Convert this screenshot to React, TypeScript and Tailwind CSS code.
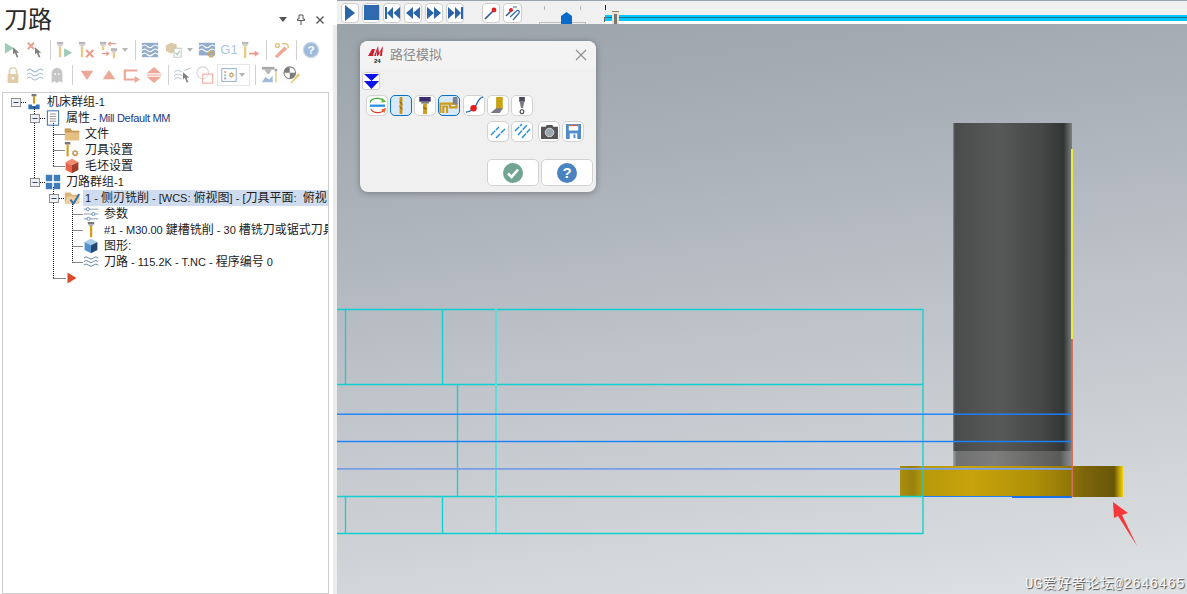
import type { ReactNode } from 'react';

const FONT = '"Liberation Sans", "Noto Sans CJK SC", sans-serif';

function Svg({ children, size = 18 }: { children: ReactNode; size?: number }) {
  return (
    <svg width={size} height={size} viewBox="0 0 20 20" className="block shrink-0">
      {children}
    </svg>
  );
}

function Tool({ x = 5, y = 1, h = 15, faded = true }: { x?: number; y?: number; h?: number; faded?: boolean }) {
  return (
    <g opacity={faded ? 0.6 : 1}>
      <rect x={x} y={y} width="7" height="3" fill="#777" />
      <rect x={x + 1} y={y + 3} width="5" height="2" fill="#aaa" />
      <rect x={x + 2.2} y={y + 5} width="2.6" height={h - 5} fill="#d59c10" />
    </g>
  );
}

function Cursor({ x = 10, y = 8 }: { x?: number; y?: number }) {
  return (
    <path
      d={`M${x} ${y} l7 6 h-3 l2 5 h-2 l-2 -5 l-2 2 z`}
      fill="#6b6b6b"
    />
  );
}

function Waves({ color = '#7f9fc4', y = 3 }: { color?: string; y?: number }) {
  return (
    <g fill="none" stroke={color} strokeWidth="1.2">
      {[0, 4.5, 9].map((d) => (
        <path key={d} d={`M1 ${y + d + 2} q3 -3 6 0 t6 0 t6 0`} />
      ))}
    </g>
  );
}

function Gear({ x, y, r = 3, color = '#c2995a' }: { x: number; y: number; r?: number; color?: string }) {
  return (
    <g>
      <circle cx={x} cy={y} r={r} fill="none" stroke={color} strokeWidth={r * 0.7} />
      <circle cx={x} cy={y} r={r + 0.9} fill="none" stroke={color} strokeWidth="1.2" strokeDasharray="1.5 1.5" />
    </g>
  );
}

function Slot({ children, className = '' }: { children: ReactNode; className?: string }) {
  return <div className={`flex h-[22px] w-[22px] shrink-0 items-center justify-center ${className}`}>{children}</div>;
}

function Sep({ className = '' }: { className?: string }) {
  return <div className={`h-[20px] w-px shrink-0 bg-[#c9c9c9] ${className}`} />;
}

function Drop({ className = '' }: { className?: string }) {
  return (
    <div className={`flex h-[20px] w-[10px] shrink-0 items-center justify-center ${className}`}>
      <div className="h-0 w-0 border-x-[3.5px] border-t-[4px] border-x-transparent border-t-[#aaa]" />
    </div>
  );
}

function PanelToolbar() {
  return (
    <div className="flex flex-col gap-[3px] pl-[2px]">
      <div className="flex h-[22px] items-center opacity-85">
        <Slot>
          <Svg><path d="M1 2 L11 8 L1 14 Z" fill="#8fc2ab" /><Cursor x={10} y={7} /></Svg>
        </Slot>
        <Slot>
          <Svg>
            <path d="M2 2 L9 9 M9 2 L2 9" stroke="#ea8d7c" strokeWidth="2.2" />
            <Cursor x={10} y={7} />
          </Svg>
        </Slot>
        <Sep className="ml-[4px]" />
        <Slot className="ml-[3px]">
          <Svg><Tool x={1} h={17} /><path d="M9 8 L18 13 L9 18 Z" fill="#8fc2ab" /></Svg>
        </Slot>
        <Slot>
          <Svg><Tool x={1} h={17} /><path d="M9 10 L17 18 M17 10 L9 18" stroke="#ea8d7c" strokeWidth="2.2" /></Svg>
        </Slot>
        <Slot>
          <Svg>
            <Tool x={0} h={9} />
            <Tool x={12} y={8} h={11} />
            <path d="M9 3 h9 M9 3 l3 -2 M9 3 l3 2 M2 14 h8 M10 14 l-3 -2 M10 14 l-3 2" stroke="#ea8d7c" strokeWidth="1.4" fill="none" />
          </Svg>
        </Slot>
        <Drop />
        <Sep className="ml-[5px]" />
        <Slot className="ml-[3px]">
          <Svg>
            <rect x="1" y="2" width="18" height="16" fill="#7f9fc4" />
            <g fill="none" stroke="#fff" strokeWidth="1.2">
              <path d="M1 6 q3 -3 6 0 t6 0 t6 0" />
              <path d="M1 10.5 q3 -3 6 0 t6 0 t6 0" />
              <path d="M1 15 q3 -3 6 0 t6 0 t6 0" />
            </g>
          </Svg>
        </Slot>
        <Slot className="ml-[2px]">
          <Svg>
            <path d="M1 5 L7 2 L13 4 L13 11 L7 14 L1 11 Z" fill="#d8bf98" />
            <rect x="10" y="8" width="8" height="10" fill="#fff" stroke="#a9bfa9" />
            <path d="M11.5 13 l2 2 l3 -4" stroke="#8fc2ab" strokeWidth="1.3" fill="none" />
          </Svg>
        </Slot>
        <Drop />
        <Slot className="ml-[1px]">
          <Svg>
            <rect x="1" y="2" width="18" height="14" fill="#7f9fc4" />
            <g fill="none" stroke="#fff" strokeWidth="1.2">
              <path d="M1 6 q3 -3 6 0 t6 0 t6 0" />
              <path d="M1 10.5 q3 -3 6 0 t6 0 t6 0" />
            </g>
            <Gear x={14.5} y={14.5} r={2.6} />
          </Svg>
        </Slot>
        <Slot>
          <span className="text-[13px] text-[#9dbbdc]">G1</span>
        </Slot>
        <Slot>
          <Svg>
            <Tool x={0} h={18} />
            <path d="M8 14 h8" stroke="#ea8d7c" strokeWidth="2" />
            <path d="M14 10.5 L19 14 L14 17.5 Z" fill="#ea8d7c" />
          </Svg>
        </Slot>
        <Sep className="ml-[4px]" />
        <Slot className="ml-[3px]">
          <Svg>
            <path d="M3 17 L14 6 L17 9 L6 19 Z" fill="#ea9a88" />
            <path d="M11 3 h5 l2 2 v3" fill="none" stroke="#d8c07a" strokeWidth="1.6" />
            <circle cx="6" cy="5" r="2.2" fill="none" stroke="#d8b56a" strokeWidth="1.4" />
          </Svg>
        </Slot>
        <Sep className="ml-[4px]" />
        <Slot className="ml-[3px]">
          <Svg>
            <circle cx="10" cy="10" r="8.5" fill="#8fb0d6" stroke="#c2d3e6" strokeWidth="1.2" />
            <text x="10" y="14.5" textAnchor="middle" fontSize="13" fontWeight="700" fill="#fff" fontFamily="Liberation Sans">?</text>
          </Svg>
        </Slot>
      </div>
      <div className="flex h-[22px] items-center opacity-85">
        <Slot>
          <Svg>
            <path d="M6 9 V6 a4 4 0 0 1 8 0 V9" fill="none" stroke="#dcc8a4" strokeWidth="1.8" />
            <rect x="4" y="9" width="12" height="10" rx="1" fill="#dcc39a" />
            <circle cx="10" cy="13.5" r="1.4" fill="#fff" />
          </Svg>
        </Slot>
        <Slot>
          <Svg><Waves color="#9db6d4" /></Svg>
        </Slot>
        <Slot>
          <Svg>
            <path d="M4 19 V8 a6 6 0 0 1 12 0 V19 L13 17 L10 19 L7 17 Z" fill="#bdbdbd" />
            <circle cx="8" cy="9" r="1" fill="#fff" />
            <circle cx="12" cy="9" r="1" fill="#fff" />
          </Svg>
        </Slot>
        <Sep className="ml-[4px]" />
        <Slot className="ml-[3px]">
          <Svg size={14}><path d="M1 4 H19 L10 17 Z" fill="#ea9a88" /></Svg>
        </Slot>
        <Slot>
          <Svg size={14}><path d="M1 16 H19 L10 3 Z" fill="#ea9a88" /></Svg>
        </Slot>
        <Slot className="ml-[1px]">
          <Svg>
            <path d="M16 5 H2 V15 H13" fill="none" stroke="#ea9a88" strokeWidth="2.4" />
            <path d="M13 11 L19 15 L13 19 Z" fill="#ea9a88" />
          </Svg>
        </Slot>
        <Slot>
          <Svg>
            <path d="M2 8 H18 L10 1 Z M2 12 H18 L10 19 Z" fill="#ea9a88" />
            <rect x="2" y="9.4" width="16" height="1.2" fill="#ea9a88" />
          </Svg>
        </Slot>
        <Sep className="ml-[3px]" />
        <Slot className="ml-[3px]">
          <Svg>
            <g fill="none" stroke="#a9bccf" strokeWidth="1.1">
              <path d="M0 7 q4 -4 9 0 M0 11 q4 -4 9 0 M0 15 q4 -4 9 0" />
            </g>
            <path d="M12 5 L19 2" stroke="#aaa" />
            <Cursor x={10} y={7} />
          </Svg>
        </Slot>
        <Slot>
          <Svg>
            <circle cx="7.5" cy="7.5" r="6.5" fill="none" stroke="#cfcfcf" strokeWidth="1.2" />
            <rect x="7.5" y="9" width="11" height="10" fill="#fff" fillOpacity="0.4" stroke="#ea9a88" strokeWidth="1.2" />
          </Svg>
        </Slot>
        <div className="ml-[1px] flex h-[22px] w-[33px] shrink-0 items-center border border-[#e2e2e2] pl-[3px]">
          <Svg size={16}>
            <rect x="1" y="2" width="18" height="16" fill="#fff" stroke="#7f9fc4" strokeWidth="1.2" />
            <rect x="4" y="5" width="2.5" height="2.5" fill="#ea9a88" />
            <rect x="4" y="9" width="2.5" height="2.5" fill="#8fc2ab" />
            <rect x="4" y="13" width="2.5" height="2.5" fill="#7f9fc4" />
            <Gear x={13} y={10} r={2} />
          </Svg>
          <Drop />
        </div>
        <Sep className="ml-[5px]" />
        <Slot className="ml-[3px]">
          <Svg>
            <rect x="1" y="1" width="14" height="3" fill="#999" />
            <path d="M4 4 H12 L9 9 H7 Z" fill="#aaa" />
            <path d="M1 18 L5 12 L9 15 L13 11 V18 Z" fill="#8fb0d6" />
            <rect x="15" y="3" width="3" height="3" fill="#999" />
            <rect x="16" y="6" width="1.4" height="12" fill="#d8b56a" />
          </Svg>
        </Slot>
        <Slot>
          <Svg>
            <circle cx="7.5" cy="7.5" r="6.5" fill="#fff" stroke="#777" strokeWidth="1.2" />
            <path d="M7.5 1 A6.5 6.5 0 0 0 1 7.5 H7.5 Z M7.5 7.5 H14 A6.5 6.5 0 0 1 7.5 14 Z" fill="#666" />
            <path d="M8 19 L17 8 L19 10 L10 19 Z" fill="#e3bf5e" />
          </Svg>
        </Slot>
      </div>
    </div>
  );
}

function TreeLines() {
  const boxes: [number, number][] = [[16, 102], [35, 118], [35, 182], [54, 198]];
  return (
    <svg width="325" height="200" viewBox="3 93 325 200" className="pointer-events-none absolute left-0 top-0">
      <g stroke="#111" strokeWidth="1" strokeDasharray="1 1" fill="none">
        <path d="M21 102.5 H27 M40 118.5 H46 M40 182.5 H46 M59 198.5 H64" />
        <path d="M34.5 107 V114 M34.5 123 V178" />
        <path d="M53.5 123 V166.5 M53.5 134.5 H65 M53.5 150.5 H65 M53.5 166.5 H65" />
        <path d="M53.5 187 V194 M53.5 203 V278.5 M53.5 278.5 H66" />
        <path d="M72.5 204 V262.5 M72.5 214.5 H83 M72.5 230.5 H83 M72.5 246.5 H83 M72.5 262.5 H83" />
      </g>
      {boxes.map(([x, y]) => (
        <g key={y}>
          <rect x={x - 4.5} y={y - 3.5} width="9" height="8" fill="#eef0f3" stroke="#8f8f8f" />
          <path d={`M${x - 2.5} ${y + 0.5} H${x + 2.5}`} stroke="#2e4a78" strokeWidth="1" />
        </g>
      ))}
    </svg>
  );
}

function Row({ pl, icon, children, selected = false }: { pl: string; icon: ReactNode; children: ReactNode; selected?: boolean }) {
  return (
    <div className={`flex h-[16px] items-center overflow-hidden whitespace-nowrap ${pl}`}>
      <div className="flex h-[16px] w-[16px] shrink-0 items-center justify-center">{icon}</div>
      {selected ? (
        <div className="ml-[3px] flex h-[16px] flex-1 items-center overflow-hidden bg-[#cfdcf0] pl-[2px]">{children}</div>
      ) : (
        <div className="ml-[5px] flex h-[16px] items-center">{children}</div>
      )}
    </div>
  );
}

function Latin({ children, color = '' }: { children: ReactNode; color?: string }) {
  return <span className={`whitespace-pre text-[11px] ${color}`}>{children}</span>;
}

function ProcessTree() {
  return (
    <div className="relative mt-[6px] ml-[2px] flex-1 overflow-hidden border border-[#cdcdcd] bg-white pt-px text-[12px] text-[#1c1c1c]">
      <TreeLines />
      <Row
        pl="pl-[23px]"
        icon={
          <Svg size={16}>
            <rect x="7" y="0" width="6" height="3" fill="#777" />
            <rect x="8.7" y="3" width="2.6" height="9" fill="#d59c10" />
            <path d="M3 13 H7 L8 15 H12 L13 13 H17 V19 H3 Z" fill="#2f6fb3" />
          </Svg>
        }
      >
        机床群组<Latin>-1</Latin>
      </Row>
      <Row
        pl="pl-[42px]"
        icon={
          <Svg size={16}>
            <rect x="3" y="1" width="14" height="18" fill="#fff" stroke="#4f7fb0" strokeWidth="1.4" />
            <path d="M6 5 H14 M6 8 H14 M6 11 H14 M6 14 H14" stroke="#888" strokeWidth="1.1" />
          </Svg>
        }
      >
        属性<Latin color="text-[#1b3b85] tracking-[-0.3px]"> - Mill Default MM</Latin>
      </Row>
      <Row
        pl="pl-[61px]"
        icon={
          <Svg size={16}>
            <path d="M1 3 H8 L10 6 H19 V18 H1 Z" fill="#e6bf82" />
            <path d="M1 3 H8 L10 6 H19 V8 H1 Z" fill="#c79a57" />
          </Svg>
        }
      >
        文件
      </Row>
      <Row
        pl="pl-[61px]"
        icon={
          <Svg size={16}>
            <rect x="1" y="0" width="7" height="3" fill="#777" />
            <rect x="3.2" y="3" width="2.6" height="15" fill="#d59c10" />
            <Gear x={14} y={14} r={2.6} />
          </Svg>
        }
      >
        刀具设置
      </Row>
      <Row
        pl="pl-[61px]"
        icon={
          <Svg size={16}>
            <path d="M10 1 L18 5 L10 9 L2 5 Z" fill="#ef8b6f" />
            <path d="M2 5 L10 9 V19 L2 15 Z" fill="#e6654b" />
            <path d="M18 5 L10 9 V19 L18 15 Z" fill="#9e3f2c" />
          </Svg>
        }
      >
        毛坯设置
      </Row>
      <Row
        pl="pl-[42px]"
        icon={
          <Svg size={16}>
            <rect x="1" y="1" width="8" height="8" fill="#3f7cbb" />
            <rect x="11" y="1" width="8" height="8" fill="#3f7cbb" />
            <rect x="1" y="11" width="8" height="8" fill="#3f7cbb" />
            <rect x="11" y="11" width="8" height="8" fill="#3f7cbb" />
          </Svg>
        }
      >
        刀路群组<Latin>-1</Latin>
      </Row>
      <Row
        selected
        pl="pl-[61px]"
        icon={
          <Svg size={16}>
            <path d="M1 3 H8 L10 6 H19 V17 H1 Z" fill="#d9b47a" />
            <path d="M1 17 L4 8 H20 L18 17 Z" fill="#efd09c" />
            <path d="M8 12 L12 17 L19 5" fill="none" stroke="#2f6fb3" strokeWidth="2.4" />
          </Svg>
        }
      >
        <Latin>1 - </Latin>侧刃铣削<Latin> - [WCS: </Latin>俯视图<Latin>] - [</Latin>刀具平面<Latin>:  </Latin>俯视
      </Row>
      <Row
        pl="pl-[80px]"
        icon={
          <Svg size={16}>
            <path d="M1 4 H19 M1 10 H19 M1 16 H19" stroke="#8a9aa8" strokeWidth="1.2" />
            <circle cx="6" cy="4" r="2" fill="#fff" stroke="#4f7fb0" />
            <circle cx="13" cy="10" r="2" fill="#fff" stroke="#4f7fb0" />
            <circle cx="7" cy="16" r="2" fill="#fff" stroke="#4f7fb0" />
          </Svg>
        }
      >
        参数
      </Row>
      <Row
        pl="pl-[80px]"
        icon={
          <Svg size={16}>
            <rect x="6" y="0" width="8" height="3" fill="#777" />
            <rect x="7.5" y="3" width="5" height="2" fill="#aaa" />
            <rect x="8.7" y="5" width="2.8" height="14" fill="#d59c10" />
          </Svg>
        }
      >
        <Latin color="text-[#14204a]">#1 - M30.00 </Latin>鍵槽铣削<Latin> - 30 </Latin>槽铣刀或锯式刀具
      </Row>
      <Row
        pl="pl-[80px]"
        icon={
          <Svg size={16}>
            <path d="M10 1 L18 5 L10 9 L2 5 Z" fill="#a9cdec" />
            <path d="M2 5 L10 9 V19 L2 15 Z" fill="#4f93cf" />
            <path d="M18 5 L10 9 V19 L18 15 Z" fill="#24486e" />
          </Svg>
        }
      >
        图形:
      </Row>
      <Row pl="pl-[80px]" icon={<Svg size={16}><Waves color="#5f7f9f" /></Svg>}>
        刀路<Latin> - 115.2K - T.NC - </Latin>程序编号<Latin> 0</Latin>
      </Row>
      <Row
        pl="pl-[61px]"
        icon={
          <svg width="10" height="12" viewBox="0 0 10 12" className="block">
            <path d="M0.5 0.5 L9.5 6 L0.5 11.5 Z" fill="#db4a2b" />
          </svg>
        }
      >
        <span />
      </Row>
    </div>
  );
}

function LeftPanel() {
  return (
    <div className="flex h-full w-[329px] shrink-0 flex-col bg-white">
      <div className="flex h-[39px] shrink-0 items-center justify-between px-[4px]">
        <span className="text-[24px] leading-none text-[#2a2a2a]">刀路</span>
        <div className="flex items-center gap-[9px] text-[#555]">
          <div className="h-0 w-0 border-x-[4px] border-t-[5px] border-x-transparent border-t-[#555]" />
          <svg width="10" height="11" viewBox="0 0 10 11" className="block">
            <path d="M3 1 H7 V5 H8.5 V6.5 H1.5 V5 H3 Z M5 6.5 V11" fill="none" stroke="#555" />
          </svg>
          <svg width="10" height="10" viewBox="0 0 10 10" className="block">
            <path d="M1.5 1.5 L8.5 8.5 M8.5 1.5 L1.5 8.5" stroke="#555" strokeWidth="1.4" />
          </svg>
        </div>
      </div>
      <PanelToolbar />
      <ProcessTree />
    </div>
  );
}

function TransportButton({ children, className = '' }: { children: ReactNode; className?: string }) {
  return (
    <div className={`flex h-[20px] w-[18px] shrink-0 items-center justify-center rounded-[4px] border border-[#cfcfcf] bg-white ${className}`}>
      {children}
    </div>
  );
}

function SimToolbar() {
  return (
    <div className="flex h-[24px] shrink-0 items-center border-t border-[#9aa2aa] bg-[#f0f0f0] pl-[4px]">
      <div className="flex gap-[3px]">
        <TransportButton>
          <svg width="12" height="16" viewBox="0 0 12 16"><path d="M1 0 L11 8 L1 16 Z" fill="#2b65a8" /></svg>
        </TransportButton>
        <TransportButton>
          <div className="h-[15px] w-[15px] bg-[#2f6ab0]" />
        </TransportButton>
        <TransportButton>
          <svg width="15" height="12" viewBox="0 0 15 12"><path d="M0 0 H2 V12 H0 Z M8 0 V12 L2 6 Z M15 0 V12 L8.5 6 Z" fill="#2b65a8" /></svg>
        </TransportButton>
        <TransportButton>
          <svg width="14" height="12" viewBox="0 0 14 12"><path d="M7 0 V12 L0 6 Z M14 0 V12 L7 6 Z" fill="#2b65a8" /></svg>
        </TransportButton>
        <TransportButton>
          <svg width="14" height="12" viewBox="0 0 14 12"><path d="M0 0 V12 L7 6 Z M7 0 V12 L14 6 Z" fill="#2b65a8" /></svg>
        </TransportButton>
        <TransportButton>
          <svg width="15" height="12" viewBox="0 0 15 12"><path d="M15 0 H13 V12 H15 Z M7 0 V12 L13 6 Z M0 0 V12 L6.5 6 Z" fill="#2b65a8" /></svg>
        </TransportButton>
      </div>
      <TransportButton className="ml-[18px]">
        <svg width="14" height="14" viewBox="0 0 14 14">
          <path d="M1 13 L9 5" stroke="#2b4f9a" strokeWidth="1.6" />
          <circle cx="10" cy="4" r="2.4" fill="#e0232b" />
        </svg>
      </TransportButton>
      <TransportButton className="ml-[3px] w-[19px] border-[#0a70c8] bg-[#d8eafa]">
        <svg width="16" height="16" viewBox="0 0 16 16">
          <path d="M1 11 L6 6" stroke="#2b4f9a" strokeWidth="1.4" />
          <circle cx="6" cy="5" r="2" fill="#e0232b" />
          <path d="M8 15 L14 8 a1.5 1.5 0 0 0 -2.5 -2 L5 12 M8 2 L12 2" fill="none" stroke="#2f6ab0" strokeWidth="1.2" />
        </svg>
      </TransportButton>
      <div className="relative ml-[17px] h-[23px] w-[47px] shrink-0">
        <div className="absolute left-[5px] top-[5px] h-[4px] w-px bg-[#b5b5b5]" />
        <div className="absolute left-[41px] top-[5px] h-[4px] w-px bg-[#b5b5b5]" />
        <div className="absolute bottom-0 left-0 h-[2px] w-full border-x border-t border-[#bdbdbd]" />
        <svg width="11" height="12" viewBox="0 0 11 12" className="absolute bottom-0 left-[22px]">
          <path d="M0 4 L5.5 0 L11 4 V12 H0 Z" fill="#0a6cc8" />
        </svg>
      </div>
      <div className="relative ml-[19px] h-full flex-1">
        <div className="absolute left-0 top-[4px] h-[5px] w-px bg-[#222]" />
        <div className="absolute inset-x-0 bottom-0 h-[3px] bg-white" />
        <div className="absolute inset-x-0 bottom-[3px] h-[6px] bg-[#00c8ff]" />
        <div className="absolute inset-x-0 bottom-[6px] h-px bg-[#17708f]" />
        <div className="absolute -left-px top-[16px] h-[5px] w-[4px] border-l border-t border-[#666]" />
        <div className="absolute left-[7px] top-[10px] h-[13px] w-[7px] border-t border-[#8c8270] bg-[#e9e2d2]" />
        <div className="absolute left-[9px] top-[13px] h-[10px] w-[3px] bg-[#777]" />
      </div>
    </div>
  );
}

function CadView() {
  const cyan = '#0fcfcf';
  return (
    <svg viewBox="337 24 850 570" width="850" height="570" className="absolute inset-0 block">
      <defs>
        <linearGradient id="cyl" x1="0" x2="1" y1="0" y2="0">
          <stop offset="0" stopColor="#8a9096" />
          <stop offset="0.015" stopColor="#4a4c4c" />
          <stop offset="0.38" stopColor="#575858" />
          <stop offset="0.75" stopColor="#454746" />
          <stop offset="0.93" stopColor="#333534" />
          <stop offset="1" stopColor="#7c8082" />
        </linearGradient>
        <linearGradient id="cylLow" x1="0" x2="1" y1="0" y2="0">
          <stop offset="0" stopColor="#a4a8ab" />
          <stop offset="0.03" stopColor="#6f7070" />
          <stop offset="0.36" stopColor="#7d7d7c" />
          <stop offset="0.9" stopColor="#5a5a59" />
          <stop offset="1" stopColor="#8e9092" />
        </linearGradient>
        <linearGradient id="base" x1="0" x2="1" y1="0" y2="0">
          <stop offset="0" stopColor="#a88f0d" />
          <stop offset="0.06" stopColor="#9a820c" />
          <stop offset="0.1" stopColor="#b69a0a" />
          <stop offset="0.32" stopColor="#c8a30b" />
          <stop offset="0.6" stopColor="#b09008" />
          <stop offset="0.77" stopColor="#8f7508" />
          <stop offset="0.82" stopColor="#7d650a" />
          <stop offset="0.96" stopColor="#695608" />
          <stop offset="0.985" stopColor="#c4a508" />
          <stop offset="1" stopColor="#f2d400" />
        </linearGradient>
      </defs>
      <rect x="953" y="123" width="119" height="328" fill="url(#cyl)" />
      <rect x="953" y="451" width="119" height="15" fill="url(#cylLow)" />
      <rect x="900" y="466" width="223" height="31" fill="url(#base)" />
      <g fill="none" stroke={cyan} strokeWidth="1.3">
        <path d="M337 309.5 H923 V533.5 H337" />
        <path d="M337 384.5 H923 M337 496.5 H923" />
        <path d="M345.5 309 V384 M345.5 497 V533 M442.5 309 V384 M442.5 497 V533 M457.5 385 V496" />
      </g>
      <rect x="495" y="309" width="2" height="224" fill="#62dcd8" />
      <g>
        <rect x="337" y="413.5" width="735" height="1.4" fill="#1a80ff" />
        <rect x="337" y="440.8" width="735" height="1.4" fill="#1a80ff" />
        <rect x="337" y="468" width="735" height="1.8" fill="#7a9fe8" />
        <rect x="923" y="496" width="149" height="1" fill="#1a80ff" />
        <rect x="1012" y="496" width="60" height="2" fill="#1a70e8" />
      </g>
      <rect x="1071" y="149" width="2" height="190" fill="#eaea40" />
      <rect x="1071.5" y="339" width="1.5" height="158" fill="#d2705c" />
      <path d="M1113 502 L1128 513 L1122 515 L1137 546 L1118 516 L1114 518 Z" fill="#f5393a" />
    </svg>
  );
}

function DlgBtn({ children, active = false, className = '' }: { children: ReactNode; active?: boolean; className?: string }) {
  return (
    <div
      className={`flex h-[21px] w-[22px] shrink-0 items-center justify-center rounded-[5px] border ${
        active ? 'border-[#0a70c8] bg-[#d8eafa]' : 'border-[#d2d2d2] bg-white'
      } ${className}`}
    >
      {children}
    </div>
  );
}

function Dialog() {
  return (
    <div className="absolute left-[23px] top-[17px] flex h-[151px] w-[236px] flex-col overflow-hidden rounded-[8px] bg-[#f0f0f0] shadow-[0_1px_6px_rgba(0,0,0,0.3)]">
      <div className="flex h-[28px] shrink-0 items-center bg-[#f3f3f3] pl-[8px] pr-[9px]">
        <div className="relative h-[20px] w-[16px] shrink-0">
          <svg width="16" height="14" viewBox="0 0 16 14" className="absolute left-0 top-0">
            <path d="M0 11 L4 4 H7 L5 11 Z M6 11 L10 1 L11 8 L15 1 L14 11 H12 L12.5 7 L10 11 H9 L9 6 L8 11 Z" fill="#cf2030" />
          </svg>
          <span className="absolute left-[6px] top-[13px] text-[6px] font-bold leading-none text-[#222]">24</span>
        </div>
        <span className="ml-[6px] flex-1 text-[13px] text-[#8a8a8a]">路径模拟</span>
        <svg width="12" height="12" viewBox="0 0 12 12" className="block">
          <path d="M1 1 L11 11 M11 1 L1 11" stroke="#8f8f8f" strokeWidth="1.1" />
        </svg>
      </div>
      <div className="ml-[2px] mt-[3px] flex h-[18px] w-[18px] items-center justify-center rounded-[3px] border border-[#d2d2d2] bg-white">
        <svg width="15" height="15" viewBox="0 0 15 15">
          <path d="M0 0 H15 L7.5 7 Z M0 7 H15 L7.5 15 Z" fill="#0a14e6" />
        </svg>
      </div>
      <div className="ml-[6px] mt-[5px] flex gap-[2px]">
        <DlgBtn>
          <svg width="19" height="19" viewBox="0 0 20 20">
            <path d="M2 7 a8 6 0 0 1 15 -1" fill="none" stroke="#3aa83a" strokeWidth="1.3" />
            <path d="M15 2 L19 6 L14 7 Z" fill="#5ac03a" />
            <rect x="2" y="9" width="16" height="2.4" fill="#2a8fe0" />
            <path d="M18 13 a8 6 0 0 1 -15 1" fill="none" stroke="#e23a2a" strokeWidth="1.3" />
            <path d="M19 13 L14 14 L17 18 Z" fill="#f05a2a" />
          </svg>
        </DlgBtn>
        <DlgBtn active>
          <svg width="18" height="19" viewBox="0 0 18 20">
            <rect x="7.5" y="1" width="3" height="18" rx="1" fill="#c9941a" />
            <path d="M7.5 6 L10.5 9 M7.5 11 L10.5 14" stroke="#6f4f08" />
          </svg>
        </DlgBtn>
        <DlgBtn>
          <svg width="18" height="19" viewBox="0 0 18 20">
            <rect x="3" y="1" width="12" height="5" fill="#3a2a70" />
            <rect x="5" y="6" width="8" height="2" fill="#777" />
            <rect x="7" y="8" width="4" height="11" fill="#cf9c1a" />
            <path d="M7 12 L11 14" stroke="#6f4f08" />
          </svg>
        </DlgBtn>
        <DlgBtn active>
          <svg width="20" height="19" viewBox="0 0 20 20">
            <path d="M1 18 V8 H18 V12 H11 V8 M4 18 V11 H8 V18" fill="none" stroke="#cf9c1a" strokeWidth="2.2" />
            <rect x="14" y="1" width="5" height="8" rx="1" fill="#7f7f90" />
          </svg>
        </DlgBtn>
        <DlgBtn className="ml-[1px]">
          <svg width="19" height="19" viewBox="0 0 20 20">
            <path d="M1 17 Q9 16 12 9 T19 1" fill="none" stroke="#2a6ab8" strokeWidth="1.4" />
            <circle cx="9" cy="13" r="3.4" fill="#ea1a1a" />
          </svg>
        </DlgBtn>
        <DlgBtn>
          <svg width="18" height="19" viewBox="0 0 18 20">
            <rect x="7" y="1" width="7" height="13" fill="#c9a20f" />
            <path d="M7 13 H14 L11 18 H1 Z" fill="#7a7a8c" />
          </svg>
        </DlgBtn>
        <DlgBtn>
          <svg width="14" height="19" viewBox="0 0 14 20">
            <rect x="4" y="1" width="6" height="5" fill="#4a4a58" />
            <path d="M4.5 6 H9.5 L8 13 H6 Z" fill="#7a7a88" />
            <circle cx="7" cy="16.5" r="2" fill="none" stroke="#444" strokeWidth="1.2" />
          </svg>
        </DlgBtn>
      </div>
      <div className="ml-[127px] mt-[5px] flex gap-[2px]">
        <DlgBtn>
          <svg width="16" height="16" viewBox="0 0 16 16">
            <path d="M1 11 L9 3 M6 14 L15 5" stroke="#1f8fe0" strokeWidth="1.4" strokeDasharray="6 1" />
          </svg>
        </DlgBtn>
        <DlgBtn>
          <svg width="17" height="17" viewBox="0 0 17 17">
            <path d="M1 8 L8 1 M4 12 L13 2 M8 15 L16 6" stroke="#1f8fe0" strokeWidth="1.4" strokeDasharray="6 1" />
          </svg>
        </DlgBtn>
        <DlgBtn className="ml-[3px]">
          <svg width="19" height="17" viewBox="0 0 20 18">
            <path d="M1 4 H6 L7 2 H13 L14 4 H19 V17 H1 Z" fill="#555" />
            <circle cx="10" cy="10" r="4.5" fill="#9aa6ae" stroke="#ddd" />
          </svg>
        </DlgBtn>
        <DlgBtn>
          <svg width="17" height="17" viewBox="0 0 18 18">
            <path d="M1 1 H17 V17 H1 Z" fill="#4f8cc8" />
            <rect x="4" y="2" width="10" height="6" fill="#fff" />
            <rect x="4" y="2" width="10" height="1.3" fill="#e0604a" />
            <rect x="5" y="11" width="8" height="6" fill="#fff" />
            <rect x="9" y="12" width="2" height="4" fill="#4f8cc8" />
          </svg>
        </DlgBtn>
      </div>
      <div className="ml-[127px] mt-[17px] flex gap-[2px]">
        <div className="flex h-[27px] w-[52px] items-center justify-center rounded-[5px] border border-[#d2d2d2] bg-white">
          <svg width="20" height="20" viewBox="0 0 20 20">
            <circle cx="10" cy="10" r="10" fill="#6fa592" />
            <path d="M5 10.5 L8.5 14 L15 6.5" fill="none" stroke="#fff" strokeWidth="2.6" />
          </svg>
        </div>
        <div className="flex h-[27px] w-[52px] items-center justify-center rounded-[5px] border border-[#d2d2d2] bg-white">
          <div className="flex h-[20px] w-[20px] items-center justify-center rounded-full bg-[#4a84c0] text-[15px] font-bold leading-none text-white">?</div>
        </div>
      </div>
    </div>
  );
}

export default function App() {
  return (
    <div className="flex h-[594px] w-[1187px] overflow-hidden bg-white" style={{ fontFamily: FONT }}>
      <LeftPanel />
      <div className="flex h-full w-[8px] shrink-0 flex-col">
        <div className="h-[25px] bg-white" />
        <div className="flex flex-1">
          <div className="w-[4px] bg-white" />
          <div className="w-[4px] bg-[#ececec]" />
        </div>
      </div>
      <div className="flex h-full min-w-0 flex-1 flex-col">
        <SimToolbar />
        <div className="relative flex-1 overflow-hidden bg-[linear-gradient(172deg,#9aa2aa_0%,#a9b0b8_25%,#bcc1c8_50%,#cdd1d5_75%,#dfe2e4_100%)]">
          <CadView />
          <Dialog />
          <span className="absolute bottom-[3px] right-[2px] whitespace-nowrap text-[14px] leading-none tracking-[0.4px] text-[#fafafa] [font-family:'Liberation_Mono','Noto_Sans_CJK_SC',monospace] [text-shadow:1px_1px_1px_#4a4a4a]">
            UG爱好者论坛@2646465
          </span>
        </div>
      </div>
    </div>
  );
}
